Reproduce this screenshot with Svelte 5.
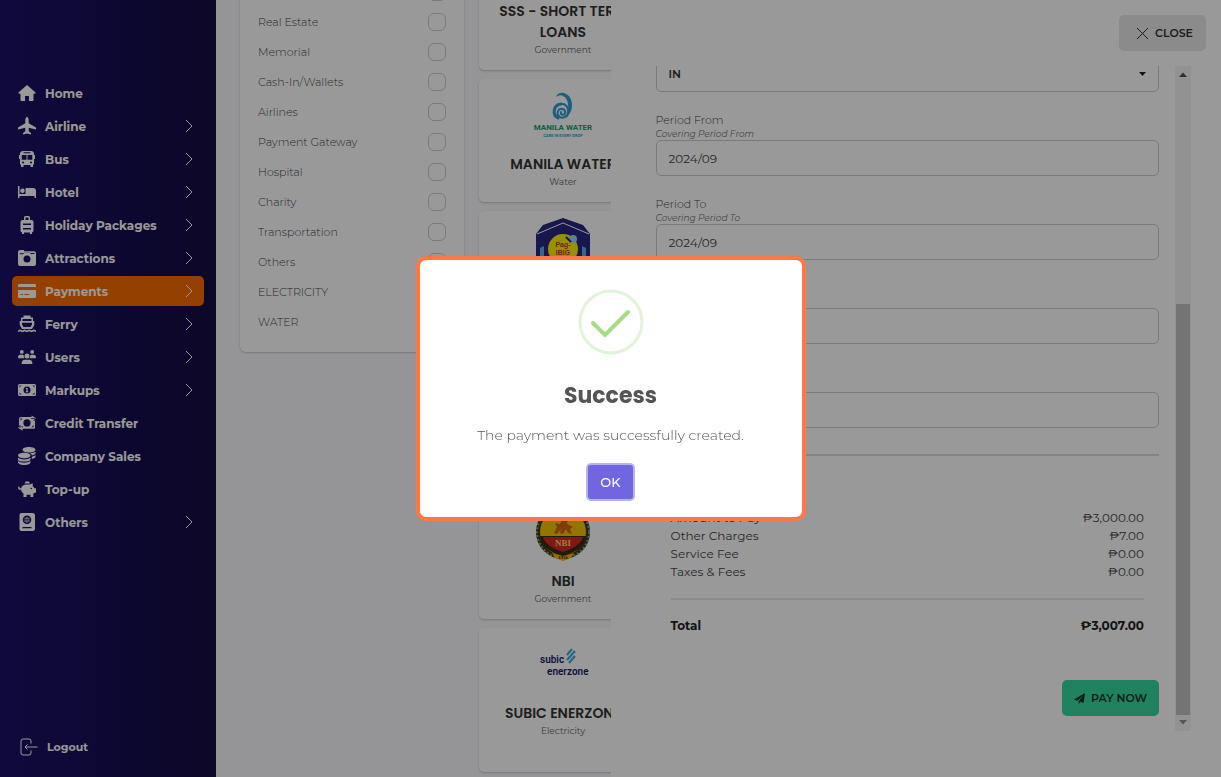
<script>
  let showAlert = true;
  let drawerOpen = true;
  let active = "Payments";

  const menu = [
    { label: "Home", icon: "home" },
    { label: "Airline", icon: "plane", sub: true },
    { label: "Bus", icon: "bus", sub: true },
    { label: "Hotel", icon: "bed", sub: true },
    { label: "Holiday Packages", icon: "luggage", sub: true },
    { label: "Attractions", icon: "camera", sub: true },
    { label: "Payments", icon: "card", sub: true },
    { label: "Ferry", icon: "ferry", sub: true },
    { label: "Users", icon: "users", sub: true },
    { label: "Markups", icon: "bill", sub: true },
    { label: "Credit Transfer", icon: "transfer" },
    { label: "Company Sales", icon: "coins" },
    { label: "Top-up", icon: "piggy" },
    { label: "Others", icon: "passport", sub: true }
  ];

  // all icons are drawn on an 18x18 grid
  const icons = {
    home: "M9 1 0.4 8.4Q0 9.8 1.4 9.800H2.500V16.200Q2.500 17 3.300 17H7V12H11V17H14.700Q15.500 17 15.500 16.200V9.800H16.600Q18 9.800 17.600 8.400Z",
    plane: "M9 0C8 0 7.300 1.600 7.300 3V6.200L0 10.600V12.600L7.300 10.800V14.300L5 16V17.600L9 16.500 13 17.600V16L10.700 14.300V10.800L18 12.600V10.600L10.700 6.200V3C10.700 1.600 10 0 9 0Z",
    bus: "M5 1H13Q16 1 16 4V5H17V9H16V14.500H15V17H12.500V15H5.500V17H3V14.500H2V9H1V5H2V4Q2 1 5 1ZM5.500 2.300V3.300H12.500V2.300ZM3.700 5V9.700H8.500V5ZM9.500 5V9.700H14.300V5ZM5 11.400A1 1 0 1 0 5 13.400 1 1 0 1 0 5 11.400ZM13 11.400A1 1 0 1 0 13 13.400 1 1 0 1 0 13 11.400Z",
    bed: "M0 3H1.500V11H7.500V5H15Q18 5 18 8V15H16.500V13H1.500V15H0ZM4.500 5.500A2.200 2.200 0 1 1 4.500 9.900 2.200 2.200 0 1 1 4.500 5.500Z",
    luggage: "M6 4V1.500Q6 0 7.500 0H10.500Q12 0 12 1.500V4H13.500Q15.500 4 15.500 6V14.500Q15.500 16 14 16.500V18H12V16.500H6V18H4V16.500Q2.500 16 2.500 14.500V6Q2.500 4 4.500 4ZM7.500 4H10.500V1.500H7.500ZM5 7.500V9H13V7.500ZM5 12V13.500H13V12Z",
    camera: "M2.500 1H6V2.300H16Q18 2.300 18 4.300V15Q18 17 16 17H2Q0 17 0 15V3Q0 1 2.500 1ZM1.800 5.200H5L6.500 3.700H12L12.800 5H16.500V3.900H6L5 4.300H1.800ZM9 6.500A3.500 3.500 0 1 0 9 13.500 3.500 3.500 0 1 0 9 6.500Z",
    card: "M1.500 2H16.500Q18 2 18 3.500V5H0V3.500Q0 2 1.500 2ZM0 8H18V14.500Q18 16 16.500 16H1.500Q0 16 0 14.500ZM2.500 12V13H5V12ZM6.500 12V13H11V12Z",
    ferry: "M5.500 0.500H12.500V2.500H15V6H16.300V10L14 14H4L1.700 10V6H3V2.500H5.500ZM4.500 4V6H13.500V4ZM4 7.700V9.500L5.500 12H12.500L14 9.500V7.700ZM0 15.500 2 14.500 4.500 15.500 6.800 14.500 9 15.500 11.200 14.500 13.500 15.500 16 14.500 18 15.500V17L15.800 16.200 13.500 17.200 11.200 16.200 9 17.200 6.800 16.200 4.500 17.200 2.200 16.200 0 17Z",
    users: "M3.800 2A1.900 1.900 0 1 1 3.800 5.800 1.900 1.900 0 1 1 3.800 2ZM14.200 2A1.900 1.900 0 1 1 14.200 5.800 1.900 1.900 0 1 1 14.200 2ZM9 5.600A2.500 2.500 0 1 1 9 10.600 2.500 2.500 0 1 1 9 5.600ZM0 9.500Q0 6.800 2.500 6.800H4.500Q5.600 6.800 5.800 7.500 5.500 8.900 6.500 10.200H0.500ZM18 9.500Q18 6.800 15.500 6.800H13.500Q12.400 6.800 12.200 7.500 12.500 8.900 11.500 10.200H17.500ZM3.600 16Q3.600 11.800 7 11.800H11Q14.400 11.800 14.400 16Z",
    bill: "M1.500 3H16.500Q18 3 18 4.500V13.500Q18 15 16.500 15H1.500Q0 15 0 13.500V4.500Q0 3 1.500 3ZM1.500 4.500V6.500L3.500 4.500ZM16.500 4.500H14.500L16.500 6.500ZM1.500 13.500H3.500L1.500 11.500ZM16.500 13.500V11.500L14.500 13.500ZM9 5.500A3.500 3.500 0 1 0 9 12.500 3.500 3.500 0 1 0 9 5.500ZM7.800 7H9.600V10.300H10.300V11.300H7.700V10.300H8.400V8H7.800Z",
    transfer: "M3 3H13.500V1.500L18 4.300 15 6.500H17V13.500Q17 14.800 15.700 14.800H4.500V16.800L0 13.700 3 11.500H1V4.800Q1 3 3 3ZM2.500 4.500V6.800L4.500 4.500ZM15.500 13.200V11L13.500 13.200ZM9 5.300A3.600 3.600 0 1 0 9 12.500 3.600 3.600 0 1 0 9 5.300ZM1 12.500H5V13.300H1ZM13 4H17V4.800H13Z",
    coins: "M11 0C14.800 0 17.500 1.200 17.500 2.700S14.800 5.400 11 5.400 4.500 4.200 4.500 2.700 7.200 0 11 0ZM6.300 5.800C10 5.800 12.500 7 12.500 8.600S10 11.300 6.300 11.300 0 10.100 0 8.600 2.600 5.800 6.300 5.800ZM17.500 4.700V6.200C17.500 7.200 16 8 13.800 8.400 13.800 7.500 13 6.700 12 6.200 14.500 6 16.500 5.500 17.500 4.700ZM17.500 8V9.700C17.500 10.700 16 11.500 13.800 11.900V9.700Q16.500 9.200 17.500 8ZM0 10.800Q2 12.600 6.300 12.600T12.500 10.800V12.200C12.500 13.700 10 14.600 6.300 14.600S0 13.700 0 12.200ZM0 14Q2 15.800 6.300 15.800T12.500 14V15.300C12.500 16.900 10 18 6.300 18S0 16.900 0 15.300Z",
    piggy: "M6.500 3.500A2.800 2.800 0 0 1 12 3.500ZM7.500 4.500H12Q13 3.500 15 3.500L14.500 5.800Q15.800 7 16.200 8.200H18V12.500L15.300 13.500V17H12.500V14.800H8.500V17H5.500V13.500Q3.300 12 3 9.800H1.500Q0 9.500 0 7.700L0.500 6.500H1.500V7.800Q1.800 8.500 3.100 8.300 4 5 7.500 4.500ZM13.200 7.700A0.800 0.800 0 1 0 13.200 9.300 0.800 0.800 0 1 0 13.200 7.700Z",
    passport: "M3.500 0H14.500Q17 0 17 2.500V15.500Q17 18 14.500 18H3.500Q1.500 18 1.500 16V2Q1.500 0 3.500 0ZM9 2.500A4.300 4.300 0 1 0 9 11.100 4.300 4.300 0 1 0 9 2.500ZM4.500 14V15.300H13.500V14ZM8.600 3.700V6.400H7.200Q7.400 4.500 8.600 3.700ZM9.400 3.700Q10.600 4.500 10.800 6.400H9.400ZM5.700 6.400Q6 5 7 4.300 6.400 5.300 6.300 6.400ZM12.300 6.400H11.700Q11.600 5.300 11 4.300 12 5 12.300 6.400ZM5.700 7.200H6.300Q6.400 8.300 7 9.300 6 8.600 5.700 7.200ZM7.200 7.200H8.600V9.900Q7.400 9.100 7.200 7.200ZM9.400 7.200H10.800Q10.600 9.100 9.400 9.900ZM11.700 7.200H12.300Q12 8.600 11 9.300 11.600 8.300 11.700 7.200Z"
  };

  const categories = [
    "Telecoms",
    "Real Estate",
    "Memorial",
    "Cash-In/Wallets",
    "Airlines",
    "Payment Gateway",
    "Hospital",
    "Charity",
    "Transportation",
    "Others",
    "ELECTRICITY",
    "WATER"
  ];

  const billers = [
    { name: "SSS - SHORT TERM LOANS", type: "Government" },
    { name: "MANILA WATER", type: "Water", logo: "manila" },
    { name: "PAG-IBIG", type: "Government", logo: "pagibig" },
    { name: "SSS", type: "Government", tall: true },
    { name: "NBI", type: "Government", logo: "nbi" },
    { name: "SUBIC ENERZONE", type: "Electricity", logo: "subic", tall: true }
  ];

  const fields = [
    { id: "from", label: "Period From", hint: "Covering Period From", value: "2024/09" },
    { id: "to", label: "Period To", hint: "Covering Period To", value: "2024/09" },
    { id: "contact", label: "Contact", hint: "Contact Number", value: "" },
    { id: "email", label: "Email", hint: "Email Address", value: "" }
  ];

  const charges = [
    ["Amount to Pay", "₱3,000.00"],
    ["Other Charges", "₱7.00"],
    ["Service Fee", "₱0.00"],
    ["Taxes & Fees", "₱0.00"]
  ];
</script>

<div class="app">
  <nav class="sidebar">
    <ul>
      {#each menu as item}
        <li>
          <a
            href="#{item.icon}"
            class:active={item.label === active}
            on:click|preventDefault={() => (active = item.label)}>
            <svg class="icon" viewBox="0 0 18 18"><path d={icons[item.icon]} /></svg>
            <span>{item.label}</span>
            {#if item.sub}
              <svg class="chevron" viewBox="0 0 8 14"><path d="M1 1l6 6-6 6" /></svg>
            {/if}
          </a>
        </li>
      {/each}
    </ul>
    <a class="logout" href="#logout">
      <svg viewBox="0 0 18 18">
        <path d="M11 5.500V3Q11 1 9 1H3Q1 1 1 3V15Q1 17 3 17H9Q11 17 11 15V12.500M17.500 9H5M7.500 6.500L5 9l2.500 2.500" />
      </svg>
      <span>Logout</span>
    </a>
  </nav>

  <main>
    <div class="page">
      <section class="filters">
        {#each categories as category}
          <label>
            <span>{category}</span>
            <input type="checkbox" />
          </label>
        {/each}
      </section>

      <section class="billers">
        {#each billers as biller}
          <article class:tall={biller.tall}>
            <div class="logo">
              {#if biller.logo === "manila"}
                <svg width="60" height="50" viewBox="0 0 60 50">
                  <path fill="#2f9fd0" d="M23 7Q25 2 31 3C39 5 41 16 37 23L33 29C36 22 37 9 30 6Q27 4 23 7Z" />
                  <g fill="none" stroke="#2f9fd0" stroke-linecap="round">
                    <path stroke-width="3" d="M25 28C19 25 20 15 28 14" />
                    <path stroke-width="2" d="M28 14C35 13 37 22 33 26C29 30 23 26 25 21C27 17 33 19 32 23C31 26 27 25 28 22" />
                  </g>
                  <text class="mw" x="30" y="40" text-anchor="middle">MANILA WATER</text>
                  <text class="mw-sub" x="30" y="47" text-anchor="middle">CARE IN EVERY DROP</text>
                </svg>
              {:else if biller.logo === "pagibig"}
                <svg width="56" height="58" viewBox="0 0 56 58">
                  <path fill="#2b2680" d="M28 0 48 7 55 16V58H1V16L8 7Z" />
                  <path fill="none" stroke="#fff" d="M2 16 28 5 54 16" />
                  <path fill="#50b4e6" d="M5 30l4-2v30H5zM51 30l-4-2v30h4z" />
                  <circle cx="28" cy="31" r="15" fill="#fff000" />
                  <circle cx="38" cy="21" r="4" fill="#9fd4f5" />
                  <path d="M31 19l5 5" stroke="#2b2680" stroke-width="2" />
                  <text class="pag" x="28" y="29" text-anchor="middle">Pag-</text>
                  <text class="pag" x="28" y="37" text-anchor="middle">IBIG</text>
                </svg>
              {:else if biller.logo === "nbi"}
                <svg width="56" height="58" viewBox="0 0 56 58">
                  <circle cx="28" cy="29" r="25" fill="#f5c400" stroke="#3b3a20" stroke-width="4" />
                  <circle cx="28" cy="29" r="26" fill="none" stroke="#86a878" stroke-width="2" stroke-dasharray="2 2" />
                  <path fill="#3a2a18" d="M5 33H51Q50 47 28 53 6 47 5 33Z" />
                  <path fill="#d42b20" d="M8 34H48Q46 43 28 49 10 43 8 34Z" />
                  <path fill="#f5b800" d="M17 50 28 53 39 50 36 55 28 58 20 55Z" />
                  <path fill="#d06a10" d="M19 30 22 24 20 20 25 21 28 14 33 16 32 21 38 24 35 26 37 31 33 30 31 26 28 31 25 30 26 26 22 31Z" />
                  <text class="nbi" x="28" y="43" text-anchor="middle">NBI</text>
                  <text class="year" x="28" y="56" text-anchor="middle">1936</text>
                </svg>
              {:else if biller.logo === "subic"}
                <svg width="54" height="34" viewBox="0 0 54 34">
                  <path stroke="#35a9dc" stroke-width="2" d="M31 8 36 2M31 13 39 4M33 16 39 9" />
                  <text class="subic" x="4" y="16">subic</text>
                  <text class="subic" x="11" y="28">enerzone</text>
                </svg>
              {/if}
            </div>
            <h3>{biller.name}</h3>
            <p>{biller.type}</p>
          </article>
        {/each}
      </section>
    </div>
  </main>

  {#if drawerOpen}
    <aside class="drawer">
      <header>
        <button class="close" on:click={() => (drawerOpen = false)}>
          <svg viewBox="0 0 14 14"><path d="M1 1l12 12M13 1L1 13" /></svg>
          CLOSE
        </button>
      </header>
      <div class="drawer-body">
        <form on:submit|preventDefault>
          <div class="field select">
            <select aria-label="Type">
              <option>IN</option>
            </select>
            <svg viewBox="0 0 7 4"><path d="M0 0h7L3.500 4z" /></svg>
          </div>
          {#each fields as field}
            <div class="field">
              <label for={field.id}>{field.label}</label>
              <small>{field.hint}</small>
              <input id={field.id} type="text" value={field.value} />
            </div>
          {/each}
          <hr class="wide" />
          <div class="summary">
            {#each charges as [name, amount]}
              <div class="row"><span>{name}</span><span>{amount}</span></div>
            {/each}
            <hr />
            <div class="row total"><span>Total</span><span>₱3,007.00</span></div>
          </div>
          <button class="pay">
            <svg viewBox="0 0 12 12"><path d="M12 0 10.500 11 7 9.500 5 12V9L10 3 3.500 8.500 0 7Z" /></svg>
            PAY NOW
          </button>
        </form>
        <div class="scrollbar">
          <svg viewBox="0 0 16 16"><path d="M4 11h8L8 6.500z" fill="#505050" /></svg>
          <div class="track"><div class="thumb"></div></div>
          <svg viewBox="0 0 16 16"><path d="M4 5h8L8 9.500z" fill="#909090" /></svg>
        </div>
      </div>
    </aside>
  {/if}

  {#if showAlert}
    <div class="backdrop">
      <div class="alert" role="alertdialog" aria-labelledby="alert-title">
        <svg class="tick" viewBox="0 0 66 66">
          <circle cx="33" cy="33" r="31" />
          <path d="M15 34l12 12 23-23" />
        </svg>
        <h2 id="alert-title">Success</h2>
        <p>The payment was successfully created.</p>
        <button on:click={() => (showAlert = false)}>OK</button>
      </div>
    </div>
  {/if}
</div>

<style>
  :global(body) {
    margin: 0;
    overflow: hidden;
  }

  .app {
    display: flex;
    height: 100vh;
    overflow: hidden;
    font-family: Montserrat, Inter, sans-serif;
    font-size: 12px;
    color: #444;
  }
  .app * {
    box-sizing: border-box;
  }
  button,
  input,
  select {
    font-family: inherit;
  }
  h2,
  h3,
  p {
    margin: 0;
  }
  h2,
  h3 {
    font-family: Poppins, Inter, sans-serif;
  }

  /* sidebar */
  .sidebar {
    display: flex;
    flex-direction: column;
    justify-content: space-between;
    flex: 0 0 216px;
    padding: 78px 12px 15px;
    background: linear-gradient(90deg, #1b1068, #150d50 60%, #160d42);
  }
  .sidebar ul {
    display: grid;
    gap: 3px;
    margin: 0;
    padding: 0;
    list-style: none;
  }
  .sidebar a {
    display: flex;
    align-items: center;
    gap: 9px;
    height: 30px;
    padding: 0 11px 0 6px;
    border-radius: 5px;
    color: #fff;
    font-weight: 700;
    text-decoration: none;
  }
  .sidebar a.active {
    background: #f76b00;
  }
  .icon {
    width: 18px;
    height: 18px;
    fill: #fff;
    fill-rule: evenodd;
  }
  .chevron {
    width: 8px;
    height: 14px;
    margin-left: auto;
    fill: none;
    stroke: #fff;
  }
  .sidebar .logout {
    padding-left: 8px;
    font-size: 11px;
  }
  .logout svg {
    width: 18px;
    height: 18px;
    fill: none;
    stroke: #fff;
  }

  /* page */
  main {
    flex: 1;
    overflow: hidden;
    background: #f8f8fd;
  }
  .page {
    display: flex;
    align-items: flex-start;
    gap: 15px;
    margin-top: -74px;
    padding: 0 24px;
  }
  .filters {
    flex: 0 0 224px;
    padding: 51px 18px 15px;
    border-radius: 6px;
    background: #fff;
    box-shadow: 0 1px 2px rgba(0, 0, 0, 0.2);
  }
  .filters label {
    display: flex;
    align-items: center;
    justify-content: space-between;
    height: 30px;
    font-size: 11px;
    font-weight: 300;
  }
  .filters input {
    appearance: none;
    width: 18px;
    height: 18px;
    margin: 0;
    border: 1px solid #ccc;
    border-radius: 6px;
  }
  .billers {
    display: grid;
    flex: 0 0 168px;
    gap: 9px;
  }
  article {
    padding: 8px 12px 13px;
    border-radius: 5px;
    background: #fff;
    box-shadow: 0 1px 2px rgba(0, 0, 0, 0.2);
    text-align: center;
  }
  article.tall {
    min-height: 144px;
  }
  .logo {
    display: flex;
    align-items: center;
    justify-content: center;
    height: 56px;
    margin-bottom: 11px;
  }
  .mw {
    font: 700 8px Roboto, sans-serif;
    fill: #12a06c;
  }
  .mw-sub {
    font: 700 4px Roboto, sans-serif;
    fill: #2f9fd0;
  }
  .pag {
    font: 700 7px "Liberation Sans", sans-serif;
    fill: #d03010;
  }
  .nbi {
    font: 700 9px "Liberation Serif", serif;
    fill: #ffd860;
  }
  .year {
    font: 700 5px "Liberation Serif", serif;
    fill: #3a2a18;
  }
  .subic {
    font: 600 10px Roboto, sans-serif;
    fill: #231a66;
  }
  h3 {
    font-size: 14px;
    font-weight: 600;
    line-height: 21px;
    color: #333;
  }
  article p {
    font-size: 9px;
    line-height: 14px;
    color: #666;
  }

  /* payment drawer */
  .drawer {
    position: fixed;
    inset: 0 0 0 50%;
    display: flex;
    flex-direction: column;
    padding: 15px 30px 46px 45px;
    background: #fff;
  }
  .drawer header {
    display: flex;
    justify-content: flex-end;
    margin: 0 -15px 15px 0;
  }
  .close,
  .pay {
    display: flex;
    align-items: center;
    gap: 6px;
    height: 36px;
    border: 0;
    border-radius: 5px;
    font-size: 11px;
    font-weight: 600;
  }
  .close {
    padding: 0 13px 0 17px;
    background: #e8e8e8;
    color: #333;
  }
  .close svg {
    width: 13px;
    height: 13px;
    stroke: #222;
  }
  .drawer-body {
    display: flex;
    flex: 1;
    gap: 16px;
    min-height: 0;
  }
  form {
    display: flex;
    flex: 1;
    flex-direction: column;
    justify-content: flex-end;
    overflow: hidden;
    padding-bottom: 15px;
  }
  .field {
    display: flex;
    flex: none;
    flex-direction: column;
    margin-bottom: 20px;
  }
  .field label {
    font-size: 11px;
    font-weight: 300;
    line-height: 16px;
  }
  .field small {
    font-size: 9px;
    font-style: italic;
    line-height: 12px;
    color: #777;
  }
  .field input,
  .field select {
    width: 100%;
    height: 36px;
    padding: 0 12px;
    border: 1px solid #ccc;
    border-radius: 5px;
    background: #fff;
    color: #444;
    font-size: 12px;
  }
  .field select {
    appearance: none;
    color: #333;
    font-size: 11px;
    font-weight: 600;
  }
  .select {
    position: relative;
  }
  .select svg {
    position: absolute;
    top: 16px;
    right: 13px;
    width: 7px;
    height: 4px;
    fill: #222;
  }
  hr {
    flex: none;
    width: 100%;
    height: 2px;
    margin: 17px 0;
    border: 0;
    background: #e6e6e6;
  }
  hr.wide {
    margin: 6px 0 0;
    background: #ddd;
  }
  .summary {
    flex: none;
    padding: 53px 15px 45px;
  }
  .row {
    display: flex;
    justify-content: space-between;
    line-height: 18px;
  }
  .total {
    color: #222;
    font-weight: 700;
  }
  .pay {
    flex: none;
    align-self: flex-end;
    padding: 0 12px;
    background: #35d79b;
    color: #12352a;
  }
  .pay svg {
    width: 11px;
    height: 11px;
    fill: #12352a;
  }
  .scrollbar {
    display: flex;
    flex-direction: column;
    width: 16px;
    background: #f4f4f4;
  }
  .scrollbar svg {
    width: 16px;
    height: 16px;
  }
  .track {
    display: flex;
    flex: 1;
    align-items: flex-end;
    padding: 0 1px;
  }
  .thumb {
    width: 100%;
    height: 65%;
    background: #c1c1c1;
  }

  /* alert */
  .backdrop {
    position: fixed;
    inset: 0;
    display: flex;
    align-items: center;
    justify-content: center;
    background: rgba(0, 0, 0, 0.4);
  }
  .alert {
    display: flex;
    flex-direction: column;
    align-items: center;
    width: 390px;
    padding: 29px 20px 18px;
    border: 4px solid #ff7846;
    border-radius: 10px;
    background: #fff;
    color: #545454;
  }
  .tick {
    width: 66px;
    height: 66px;
    fill: none;
  }
  .tick circle {
    stroke: #e1f4d8;
    stroke-width: 3;
  }
  .tick path {
    stroke: #a5dc86;
    stroke-width: 4;
    stroke-linecap: round;
  }
  .alert h2 {
    margin-top: 25px;
    font-size: 22px;
    font-weight: 700;
    line-height: 32px;
  }
  .alert p {
    margin: 13px 0 20px;
    font-size: 14px;
    font-weight: 300;
    line-height: 20px;
  }
  .alert button {
    width: 45px;
    height: 34px;
    border: 0;
    border-radius: 3px;
    background: #7066e0;
    box-shadow: 0 0 0 2px #b8b2f0;
    color: #fff;
    font-size: 13px;
    font-weight: 500;
  }
</style>
